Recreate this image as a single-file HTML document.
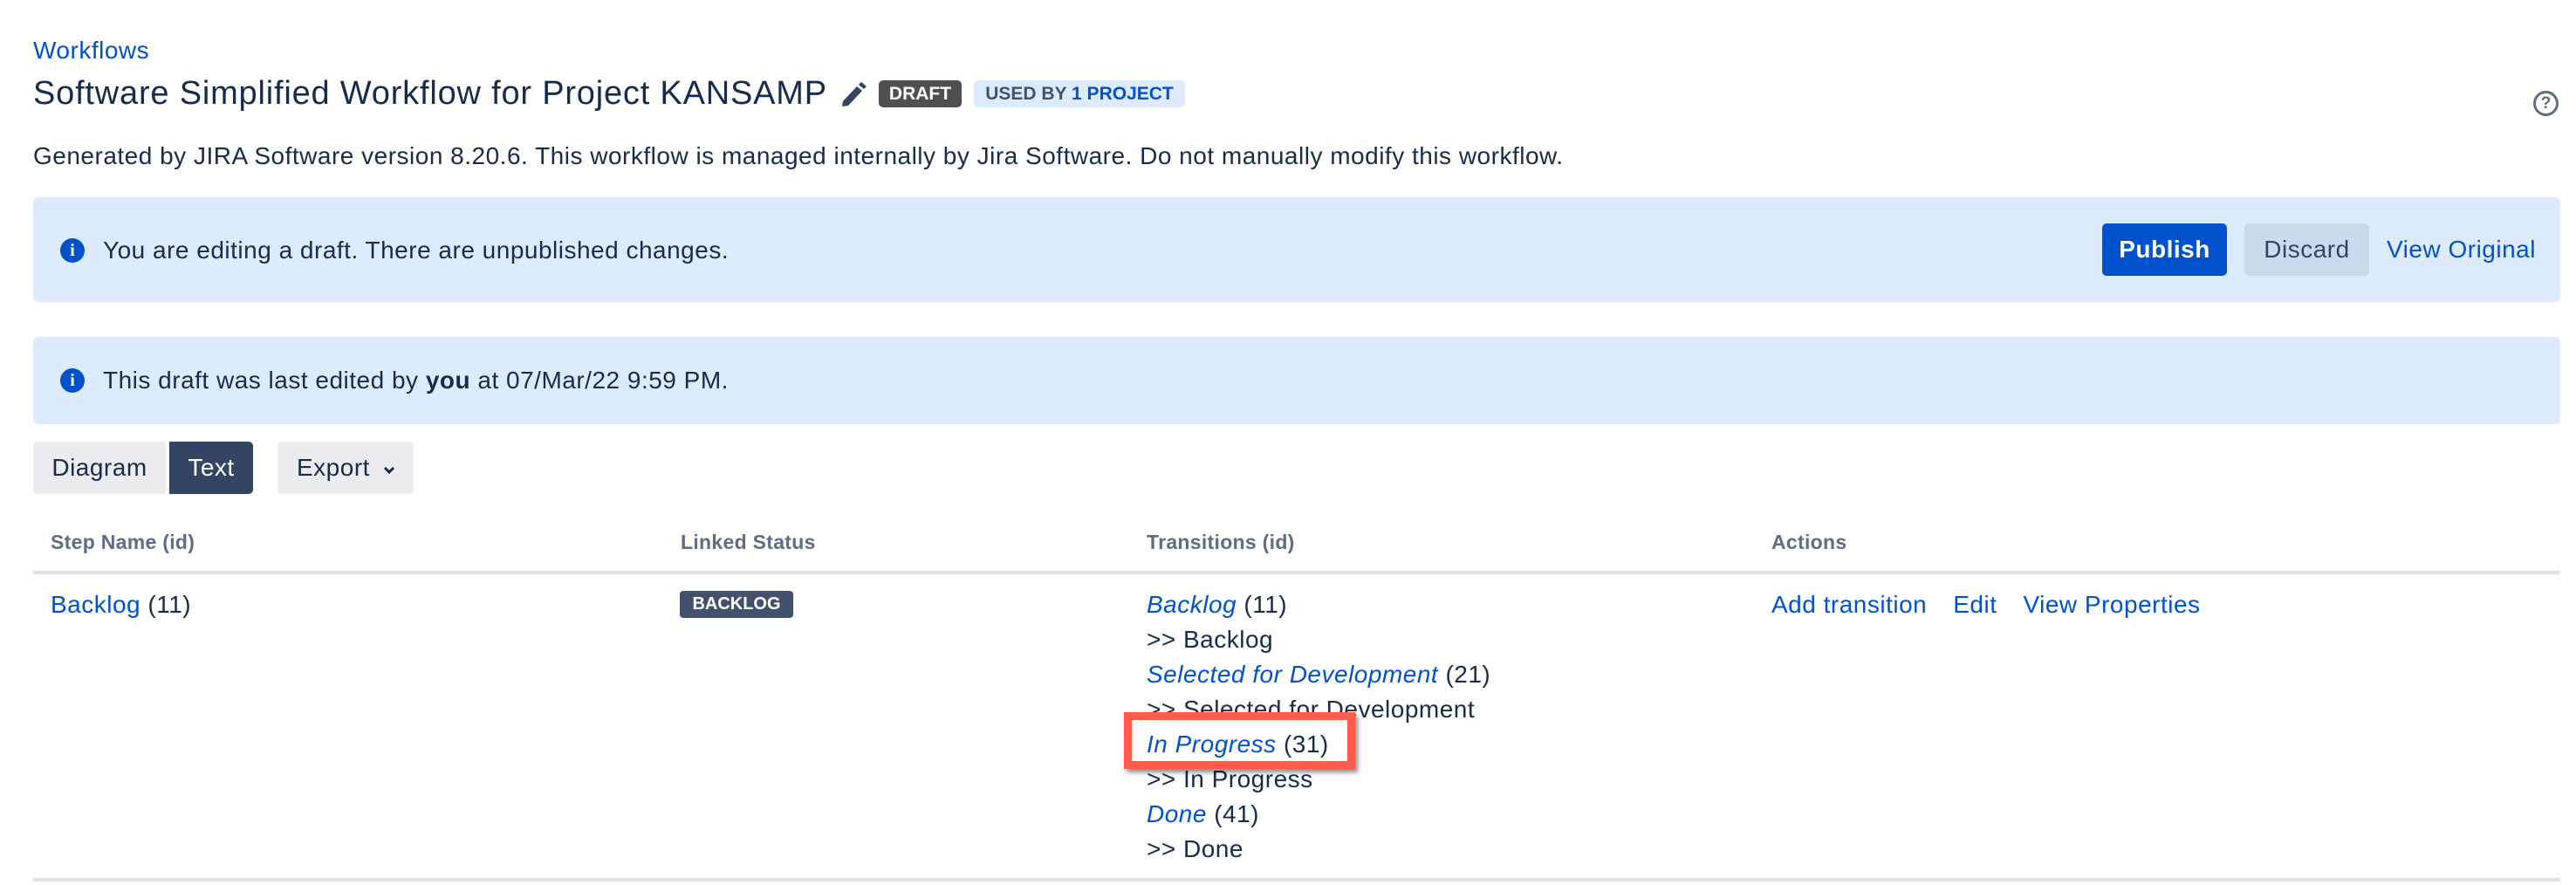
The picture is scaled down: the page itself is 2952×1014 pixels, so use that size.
<!DOCTYPE html>
<html><head><meta charset="utf-8"><style>
*{margin:0;padding:0;box-sizing:border-box}
body{width:2952px;height:1014px;background:#fff;font-family:"Liberation Sans",sans-serif;color:#172B4D;position:relative;overflow:hidden;font-size:28px;letter-spacing:0.5px}
.a{position:absolute;white-space:nowrap}
.l{color:#0052CC}
.c{line-height:40px;height:40px}
.i{font-style:italic}
.hdr{color:#5E6C84;font-weight:bold;font-size:23px;letter-spacing:0.3px}
.info{position:absolute;width:28px;height:28px;border-radius:50%;background:#0052CC;color:#fff;font-weight:bold;font-size:20px;text-align:center;line-height:28px;font-family:"Liberation Serif",serif;letter-spacing:0}
</style></head><body>
<div class="a l c" style="left:38px;top:38px">Workflows</div>
<div class="a" style="left:38px;top:83px;font-size:38px;line-height:48px;color:#172B4D;letter-spacing:0.8px">Software Simplified Workflow for Project KANSAMP</div>
<svg class="a" style="left:963px;top:94px" width="30" height="28" viewBox="0 0 30 28"><path d="M3 22 L19 5 L25 10 L9 27 L2 28 Z" fill="#344563"/><path d="M21 3 L24 0 L30 5 L27 8 Z" fill="#344563"/></svg>
<div class="a" style="left:1007px;top:92px;width:95px;height:31px;background:#505050;border-radius:5px;color:#fff;font-weight:bold;font-size:21px;line-height:31px;text-align:center;letter-spacing:0">DRAFT</div>
<div class="a" style="left:1116px;top:92px;width:242px;height:31px;background:#DEEBFF;border-radius:5px;color:#42526E;font-weight:bold;font-size:21px;line-height:31px;text-align:center;letter-spacing:0">USED BY <span style="color:#0052CC">1 PROJECT</span></div>
<div class="a" style="left:2903px;top:104px;width:29px;height:29px;border:3px solid #5E6C84;border-radius:50%;color:#5E6C84;font-weight:bold;font-size:19px;line-height:23px;text-align:center;letter-spacing:0">?</div>
<div class="a c" style="left:38px;top:159px">Generated by JIRA Software version 8.20.6. This workflow is managed internally by Jira Software. Do not manually modify this workflow.</div>

<div class="a" style="left:38px;top:226px;width:2896px;height:120px;background:#DEEBFF;border-radius:6px"></div>
<div class="info" style="left:69px;top:273px">i</div>
<div class="a c" style="left:118px;top:267px;color:#172B4D">You are editing a draft. There are unpublished changes.</div>
<div class="a" style="left:2409px;top:256px;width:143px;height:60px;background:#0052CC;border-radius:5px;color:#fff;font-weight:bold;line-height:60px;text-align:center">Publish</div>
<div class="a" style="left:2572px;top:256px;width:143px;height:60px;background:#CADBEE;border-radius:5px;color:#344563;line-height:60px;text-align:center">Discard</div>
<div class="a l" style="left:2735px;top:256px;line-height:60px">View Original</div>

<div class="a" style="left:38px;top:386px;width:2896px;height:100px;background:#DEEBFF;border-radius:6px"></div>
<div class="info" style="left:69px;top:422px">i</div>
<div class="a c" style="left:118px;top:416px">This draft was last edited by <b>you</b> at 07/Mar/22 9:59 PM.</div>

<div class="a" style="left:38px;top:506px;width:152px;height:60px;background:#EBECF0;border-radius:5px 0 0 5px;color:#172B4D;line-height:60px;text-align:center">Diagram</div>
<div class="a" style="left:194px;top:506px;width:96px;height:60px;background:#344563;border-radius:0 5px 5px 0;color:#fff;line-height:60px;text-align:center">Text</div>
<div class="a" style="left:318px;top:506px;width:156px;height:60px;background:#EBECF0;border-radius:5px;color:#172B4D;line-height:60px;padding-left:22px">Export <svg width="16" height="12" viewBox="0 0 16 12" style="margin-left:6px"><path d="M3 3 L8 8 L13 3" stroke="#172B4D" stroke-width="3" fill="none"/></svg></div>

<div class="a hdr c" style="left:58px;top:601px">Step Name (id)</div>
<div class="a hdr c" style="left:780px;top:601px">Linked Status</div>
<div class="a hdr c" style="left:1314px;top:601px">Transitions (id)</div>
<div class="a hdr c" style="left:2030px;top:601px">Actions</div>
<div class="a" style="left:38px;top:654px;width:2896px;height:4px;background:#DFE1E6"></div>

<div class="a c" style="left:58px;top:673px"><span class="l">Backlog</span> (11)</div>
<div class="a" style="left:779px;top:677px;width:130px;height:31px;background:#42526E;border-radius:4px;color:#fff;font-weight:bold;font-size:20px;line-height:31px;text-align:center;letter-spacing:0">BACKLOG</div>
<div class="a c" style="left:1314px;top:673px"><span class="l i">Backlog</span> (11)</div>
<div class="a c" style="left:1314px;top:713px">&gt;&gt; Backlog</div>
<div class="a c" style="left:1314px;top:753px"><span class="l i">Selected for Development</span> (21)</div>
<div class="a c" style="left:1314px;top:793px">&gt;&gt; Selected for Development</div>
<div class="a c" style="left:1314px;top:873px">&gt;&gt; In Progress</div>
<div class="a" style="left:1288px;top:816px;width:265px;height:65px;border:9px solid #FF5A4A;background:#fff;box-shadow:3px 4px 5px rgba(0,0,0,0.45)"></div>
<div class="a c" style="left:1314px;top:833px"><span class="l i">In Progress</span> (31)</div>
<div class="a c" style="left:1314px;top:913px"><span class="l i">Done</span> (41)</div>
<div class="a c" style="left:1314px;top:953px">&gt;&gt; Done</div>
<div class="a c l" style="left:2030px;top:673px">Add transition<span style="margin-left:30px">Edit</span><span style="margin-left:30px">View Properties</span></div>
<div class="a" style="left:38px;top:1006px;width:2896px;height:4px;background:#DFE1E6"></div>
</body></html>
